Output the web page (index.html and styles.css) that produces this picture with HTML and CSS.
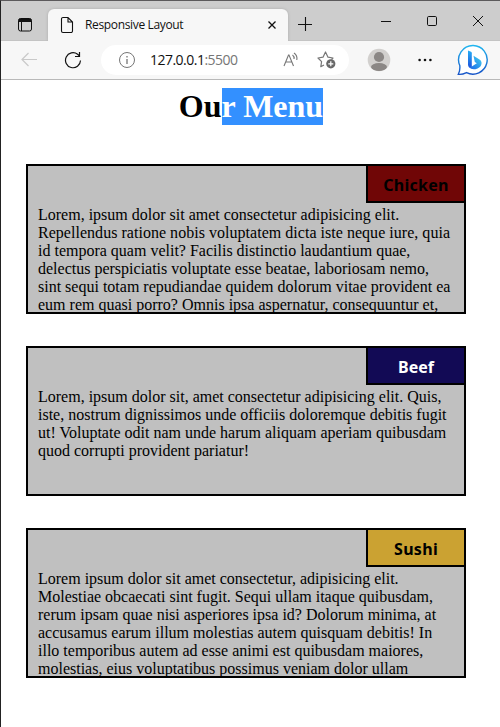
FILE: index.html
```html
<!DOCTYPE html>
<html lang="en">
<head>
<meta charset="utf-8">
<title>Responsive Layout</title>
<link rel="stylesheet" href="styles.css">
</head>
<body>
<div class="window">
  <header class="tabstrip">
    <svg class="workspace" width="16" height="16" viewBox="0 0 16 16"><rect x="1.5" y="1.5" width="13" height="12.5" rx="2" fill="none" stroke="#111"/><path d="M1.5 5V3.5a2 2 0 0 1 2-2h9a2 2 0 0 1 2 2V5z" fill="#111"/><path d="M4.5 5v9" stroke="#111"/></svg>
    <div class="tab">
      <svg class="page-icon" width="14" height="18" viewBox="0 0 14 18"><path d="M3 1.5h5L12.500 6v9a1.500 1.500 0 0 1-1.500 1.500H3A1.500 1.500 0 0 1 1.500 15V3A1.500 1.500 0 0 1 3 1.500zM8 1.500V6h4.500" fill="none" stroke="#111" stroke-width="1.100"/></svg>
      <span class="tab-title">Responsive Layout</span>
      <svg class="tab-close" width="10" height="10" viewBox="0 0 10 10"><path d="M1.500 1.500l7 7M8.500 1.500l-7 7" stroke="#111" stroke-width="1.300"/></svg>
    </div>
    <svg class="new-tab" width="16" height="16" viewBox="0 0 16 16"><path d="M1 8.500h14M8.500 1v14" stroke="#111" stroke-width="1.100"/></svg>
    <div class="controls">
      <svg width="12" height="12" viewBox="0 0 12 12"><path d="M1 6.500h10" stroke="#111"/></svg>
      <svg width="12" height="12" viewBox="0 0 12 12"><rect x="1.500" y="1.500" width="9" height="9" rx="1.200" fill="none" stroke="#111"/></svg>
      <svg width="12" height="12" viewBox="0 0 12 12"><path d="M1 1l10 10M11 1L1 11" stroke="#111"/></svg>
    </div>
  </header>
  <nav class="toolbar">
    <svg class="back" width="18" height="16" viewBox="0 0 18 16"><path d="M17 7.500H2M8.500 1L2 7.500 8.500 14" fill="none" stroke="#c9c9c9" stroke-width="1.200"/></svg>
    <svg class="reload" width="18" height="18" viewBox="0 0 18 18"><path d="M16.500 9.500A7.500 7.500 0 1 1 13.600 3.300L15.500 5M15.500 1v4.500H11" fill="none" stroke="#111" stroke-width="1.200"/></svg>
    <div class="address">
      <svg class="info" width="18" height="18" viewBox="0 0 18 18"><circle cx="9" cy="9" r="7.500" fill="none" stroke="#767676"/><path d="M9 8v5M9 5v1.500" stroke="#767676" stroke-width="1.300"/></svg>
      <span class="url">127.0.0.1<span class="port">:5500</span></span>
      <svg class="read" width="18" height="18" viewBox="0 0 18 18"><path d="M2 15L6.500 4h.5l4.500 11M3.500 11h6.500M10.500 4a4 4 0 0 1 1.500 4M12 2a7 7 0 0 1 2.800 7" fill="none" stroke="#777" stroke-width="1.100"/></svg>
      <svg class="star" width="20" height="20" viewBox="0 0 20 20"><path d="M7 15l-3.200 1.700.8-5L1 8l5-.8L8.500 2 11 7.200l5 .8-1.500 1.500" fill="none" stroke="#777" stroke-width="1.200" stroke-linejoin="round"/><circle cx="13.800" cy="13.800" r="4.600" fill="#686868"/><path d="M11.300 13.800h5M13.800 11.300v5" stroke="#fff" stroke-width="1.200"/></svg>
    </div>
    <svg class="profile" width="24" height="24" viewBox="0 0 24 24"><clipPath id="face"><circle cx="12" cy="12" r="11.300"/></clipPath><circle cx="12" cy="12" r="11.300" fill="#d2d0ce"/><g clip-path="url(#face)" fill="#8b8785"><circle cx="12" cy="9" r="5.100"/><ellipse cx="12" cy="19" rx="8" ry="4"/></g></svg>
    <svg class="more" width="14" height="4" viewBox="0 0 14 4"><g fill="#111"><circle cx="1.600" cy="2" r="1.300"/><circle cx="7" cy="2" r="1.300"/><circle cx="12.400" cy="2" r="1.300"/></g></svg>
    <svg class="bing" width="32" height="32" viewBox="0 0 32 32"><defs><linearGradient id="ring" x2="0" y2="1"><stop stop-color="#20b5ef"/><stop offset="1" stop-color="#1754c8"/></linearGradient><linearGradient id="stem" x2="0" y2="1"><stop stop-color="#27aef5"/><stop offset="1" stop-color="#1c50dc"/></linearGradient><linearGradient id="bowl" x1="1" y1="0" x2="0" y2="1"><stop stop-color="#42d5f0"/><stop offset="1" stop-color="#1b62e8"/></linearGradient></defs><path d="M16.200 1.500A14.300 14.300 0 1 1 9.500 28.600Q5 30.800 1.300 30.300 3.300 27 2.800 21.500A14.300 14.300 0 0 1 16.200 1.500z" fill="#fff" stroke="url(#ring)" stroke-width="1.400"/><path d="M11 6.500l3 1.200q.8.400.8 1.500V24q-3.800 0-3.800-3.500z" fill="url(#stem)"/><path d="M16.500 11.800l6 3.700q3 2 1.700 5.500-1.200 3-5.700 4.200-4.500.7-6.500-2.200l2.800-.5 5-3.200-2-1.300z" fill="url(#bowl)"/></svg>
  </nav>
  <main>
    <h1>Ou<span class="selected">r Menu</span></h1>
    <section class="card">
      <h2 class="tag chicken">Chicken</h2>
      <p>Lorem, ipsum dolor sit amet consectetur adipisicing elit.<br><span class="wide">Repellendus ratione nobis voluptatem dicta iste neque iure, quia</span><br>id tempora quam velit? Facilis distinctio laudantium quae,<br>delectus perspiciatis voluptate esse beatae, laboriosam nemo,<br>sint sequi totam repudiandae quidem dolorum vitae provident ea<br>eum rem quasi porro? Omnis ipsa aspernatur, consequuntur et,</p>
    </section>
    <section class="card">
      <h2 class="tag beef">Beef</h2>
      <p>Lorem, ipsum dolor sit, amet consectetur adipisicing elit. Quis,<br>iste, nostrum dignissimos unde officiis doloremque debitis fugit<br>ut! Voluptate odit nam unde harum aliquam aperiam quibusdam<br>quod corrupti provident pariatur!</p>
    </section>
    <section class="card">
      <h2 class="tag sushi">Sushi</h2>
      <p>Lorem ipsum dolor sit amet consectetur, adipisicing elit.<br>Molestiae obcaecati sint fugit. Sequi ullam itaque quibusdam,<br>rerum ipsam quae nisi asperiores ipsa id? Dolorum minima, at<br>accusamus earum illum molestias autem quisquam debitis! In<br>illo temporibus autem ad esse animi est quibusdam maiores,<br>molestias, eius voluptatibus possimus veniam dolor ullam</p>
    </section>
  </main>
</div>
</body>
</html>
```
FILE: styles.css
```css
* { box-sizing: border-box; }
body { margin: 0; background: #fff; overflow: hidden; }
svg { display: block; flex: none; }
.window { width: 500px; height: 727px; border-top: 1px solid #5c5a5c; border-left: 1px solid #222; overflow: hidden; }
.tabstrip { height: 40px; background: #cdcdcd; display: flex; align-items: flex-start; padding-left: 16px; border-bottom: 1px solid #c4c4c4; }
.workspace { margin-top: 16px; }
.tab { width: 240px; height: 32px; margin: 8px 0 0 15px; padding-left: 12px; background: #f7f7f7; border-radius: 6px 6px 0 0; display: flex; align-items: center; flex: none; box-shadow: 0 0 3px #aaa; clip-path: inset(-3px -3px 0); }
.tab-title { margin-left: 11px; width: 182px; font: 12px/18px "Open Sans", sans-serif; color: #111; white-space: nowrap; letter-spacing: -.35px; }
.new-tab { margin: 15px 0 0 9px; }
.controls { display: flex; gap: 34px; margin: 14px 0 0 67px; }
.toolbar { height: 39px; display: flex; align-items: center; background: #f7f7f7; border-bottom: 1px solid #b9b9b9; padding-left: 19px; }
.reload { margin-left: 26px; }
.address { height: 30px; width: 248px; margin-left: 19px; display: flex; align-items: center; background: #fff; border-radius: 15px; flex: none; padding-left: 17px; }
.url { margin-left: 14px; width: 132px; font: 14px/20px "Open Sans", sans-serif; color: #111; letter-spacing: -.52px; }
.port { color: #767676; }
.star { margin-left: 17px; }
.profile { margin-left: 18px; }
.more { margin-left: 27px; }
.bing { margin-left: 25px; }
main { padding: 8px 33px 0 25px; font-family: "Liberation Serif", serif; color: #000; }
h1 { margin: 0 0 39px; padding-left: 10px; width: 460px; font-size: 32px; line-height: 37px; font-weight: bold; text-align: center; padding-right: 20px; }
.selected { display: inline-block; height: 37px; background: #3390ff; color: #fff; white-space: pre; }
.card { width: 440px; height: 150px; margin-bottom: 32px; border: 2px solid #000; background: #c0c0c0; overflow: hidden; }
.tag { width: 100px; height: 39px; margin: -2px -2px 0 auto; border: 2px solid #000; font: bold 16px/38px "Noto Sans", sans-serif; text-align: center; }
.chicken { background: #700606; color: #000; letter-spacing: .25px; }
.beef { background: #120a55; color: #fff; }
.sushi { background: #cba232; color: #000; letter-spacing: .3px; }
.card p { margin: 3px 0 0 10px; font-size: 16px; line-height: 18px; white-space: nowrap; }
.wide { letter-spacing: .03px; }
```
